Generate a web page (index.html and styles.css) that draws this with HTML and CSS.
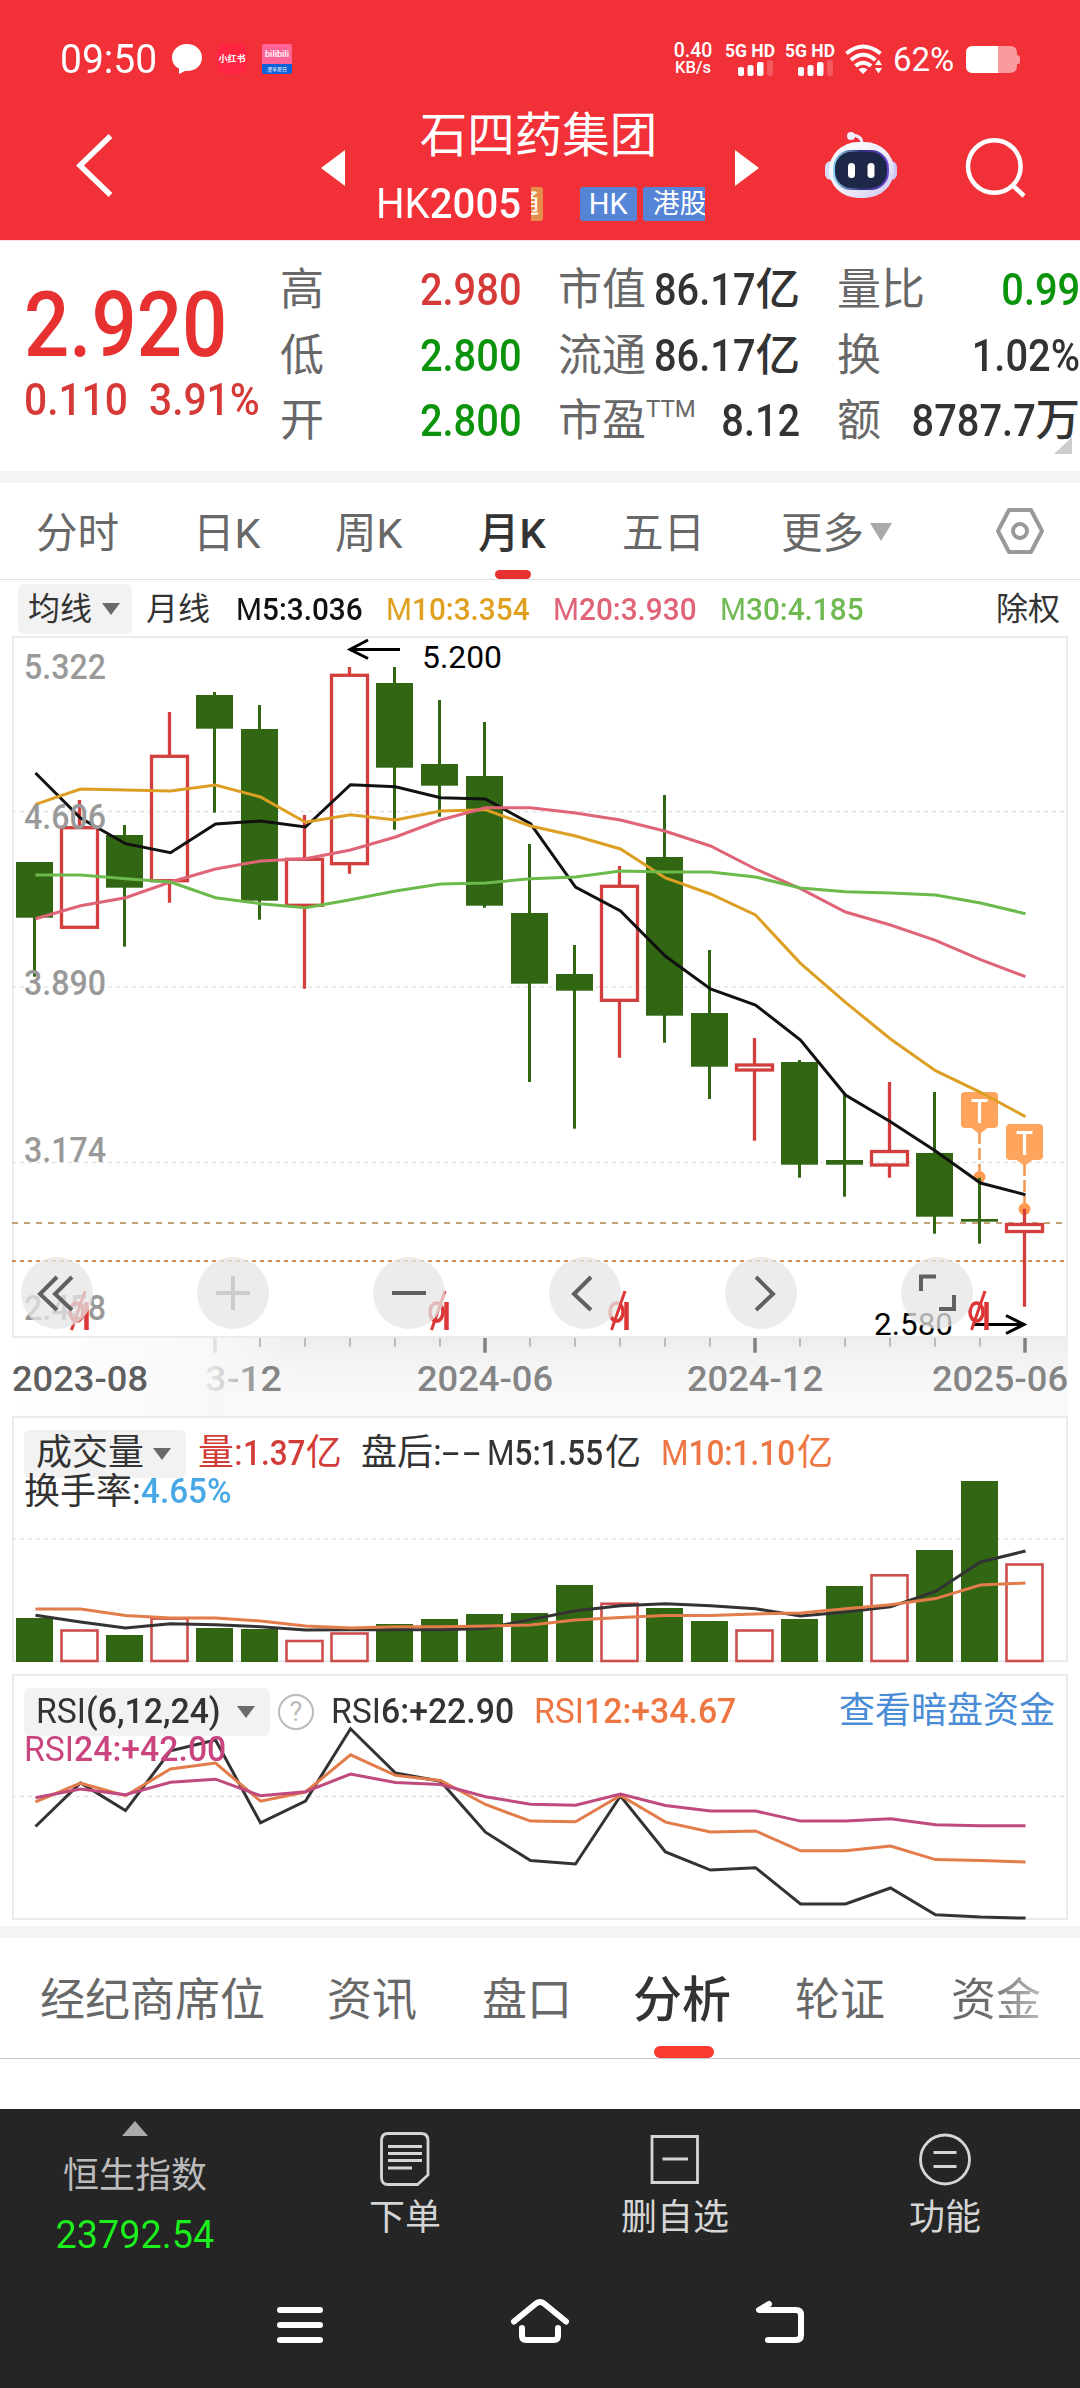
FILE: index.html
```html
<!DOCTYPE html>
<html lang="zh-CN">
<head>
    <meta charset="UTF-8">
    <meta name="viewport" content="width=device-width, initial-scale=1.0">
    <title>石四药集团 HK2005</title>
    <link rel="stylesheet" href="styles.css">
</head>
<body>
    <header class="header">
        <div class="status-bar">
            <span class="time"><span class="num">09:50</span></span>
            <svg class="app-icon" width="30" height="30" viewBox="0 0 30 30"><path d="M15 0C6.500 0 0 6 0 13.500c0 5 2.800 9 7 11.300V30l6-3c10 .8 17-5 17-13.500C30 6 23.500 0 15 0z" fill="#fff"/></svg>
            <span class="app-icon app-xhs">小红书</span>
            <span class="app-icon app-bili"><b>bilibili</b><i>漫享夏日</i></span>
            <span class="spacer"></span>
            <span class="speed">0.40<small>KB/s</small></span>
            <span class="signal">5G HD
                <svg width="35" height="16" viewBox="0 0 35 16"><g fill="#fff"><rect x="0" y="7" width="6" height="9" rx="2"/><rect x="9.500" y="5" width="6" height="11" rx="2"/><rect x="19" y="2" width="6.500" height="14" rx="2"/><rect x="29" y="0" width="6" height="16" rx="2" opacity=".2"/></g></svg>
            </span>
            <span class="signal">5G HD
                <svg width="35" height="16" viewBox="0 0 35 16"><g fill="#fff"><rect x="0" y="7" width="6" height="9" rx="2"/><rect x="9.500" y="5" width="6" height="11" rx="2"/><rect x="19" y="2" width="6.500" height="14" rx="2"/><rect x="29" y="0" width="6" height="16" rx="2" opacity=".2"/></g></svg>
            </span>
            <svg class="wifi" width="37" height="30" viewBox="0 0 37 30">
                <g fill="none" stroke="#fff" stroke-width="4"><path d="M1.500 9.500Q18 -4.500 35.500 9.500"/><path d="M6 16Q18 5.500 30.500 16"/><path d="M10.500 22Q18 15.500 26 22"/></g>
                <path d="M13.500 25.500Q18 22 22.500 25.500L18 30z" fill="#fff"/>
                <path d="M30 21l3.500-5.500L37 21zM30 24h7l-3.500 5.500z" fill="#fff"/>
            </svg>
            <span class="percent">62%</span>
            <svg width="54" height="27" viewBox="0 0 54 27"><path d="M7 0h37q7 0 7 7v2q3 0 3 3v4q0 2-3 2v2q0 7-7 7H7q-7 0-7-7V7q0-7 7-7z" fill="#f99a9c"/><path d="M7 0h25v27H7q-7 0-7-7V7q0-7 7-7z" fill="#fff"/></svg>
        </div>
        <div class="nav-bar">
            <svg class="back" width="40" height="66" viewBox="75 132 40 66"><path d="M110.500 136L80 165.500l30.500 29.500" fill="none" stroke="#fff" stroke-width="5.500"/></svg>
            <svg class="prev" width="24" height="36" viewBox="0 0 24 36"><path d="M24 0v36L0 18z" fill="#fff"/></svg>
            <div class="title">
                <h1>石四药集团</h1>
                <div class="code">
                    <span class="code-text"><span class="num">HK<b>2005</b></span></span>
                    <span class="tag tag-orange">通</span>
                    <span class="tag tag-hk">HK</span>
                    <span class="tag tag-market">港股</span>
                </div>
            </div>
            <svg class="next" width="24" height="36" viewBox="0 0 24 36"><path d="M0 0v36l24-18z" fill="#fff"/></svg>
            <svg class="robot" width="72" height="68" viewBox="825 131 72 68">
                <defs>
                    <linearGradient id="shell" x1="0" y1="0" x2="1" y2="1"><stop offset="0" stop-color="#fff"/><stop offset=".6" stop-color="#eceafa"/><stop offset="1" stop-color="#c9c4f0"/></linearGradient>
                    <linearGradient id="rim" x1="0" y1="0" x2="1" y2="0"><stop offset="0" stop-color="#8fd3f5"/><stop offset=".5" stop-color="#2b2d6e"/><stop offset="1" stop-color="#6b46d8"/></linearGradient>
                </defs>
                <path d="M851 135q11 0 11 9" fill="none" stroke="#eeebfa" stroke-width="3"/>
                <circle cx="851" cy="136" r="4" fill="#f2effc"/>
                <rect x="825" y="161" width="12" height="19" rx="6" fill="#d8defa"/>
                <rect x="885" y="161" width="12" height="19" rx="6" fill="#cdc6f5"/>
                <rect x="829" y="142" width="65" height="56" rx="29" fill="url(#shell)"/>
                <rect x="834" y="151" width="54" height="38" rx="17" fill="#1d2748" stroke="url(#rim)" stroke-width="2"/>
                <rect x="848" y="163" width="7" height="15" rx="3.500" fill="#fff"/>
                <rect x="867.500" y="163" width="7" height="15" rx="3.500" fill="#fff"/>
            </svg>
            <svg class="search" width="64" height="62" viewBox="964 136 64 62"><g fill="none" stroke="#fff" stroke-width="4.500"><circle cx="994.300" cy="166.500" r="26.300"/><path d="M1013 185.500l11 10.500"/></g></svg>
        </div>
    </header>

    <section class="quote">
        <div class="price-block">
            <div class="price"><span class="num">2.920</span></div>
            <div class="change"><span class="num">0.110</span><span class="num">3.91%</span></div>
        </div>
        <dl class="stats stats-1">
            <dt>高</dt><dd class="up"><span class="num">2.980</span></dd>
            <dt>低</dt><dd class="down"><span class="num">2.800</span></dd>
            <dt>开</dt><dd class="down"><span class="num">2.800</span></dd>
        </dl>
        <dl class="stats stats-2">
            <dt>市值</dt><dd><span class="num">86.17</span>亿</dd>
            <dt>流通</dt><dd><span class="num">86.17</span>亿</dd>
            <dt>市盈<sup>TTM</sup></dt><dd><span class="num">8.12</span></dd>
        </dl>
        <dl class="stats stats-3">
            <dt>量比</dt><dd class="down"><span class="num">0.99</span></dd>
            <dt>换</dt><dd><span class="num">1.02%</span></dd>
            <dt>额</dt><dd><span class="num">8787.7</span>万</dd>
        </dl>
        <span class="corner"></span>
    </section>

    <nav class="period-tabs">
        <span>分时</span>
        <span>日K</span>
        <span>周K</span>
        <span class="active">月K</span>
        <span>五日</span>
        <span>更多<i class="caret"></i></span>
        <svg width="48" height="46" viewBox="0 0 48 46"><g fill="none" stroke="#999" stroke-width="4" stroke-linejoin="round"><path d="M13 2h22l11 21-11 21H13L2 23z"/><circle cx="24" cy="23" r="7"/></g></svg>
    </nav>

    <div class="ma-legend">
        <span class="picker">均线<i class="caret"></i></span>
        <span>月线</span>
        <span class="num ma5">M<b>5:3.036</b></span>
        <span class="num ma10">M<b>10:3.354</b></span>
        <span class="num ma20">M<b>20:3.930</b></span>
        <span class="num ma30">M<b>30:4.185</b></span>
        <span>除权</span>
    </div>

    <section class="panel">
        <svg width="1080" height="780" viewBox="0 636 1080 780">
            <defs>
                <linearGradient id="axisBg" x1="0" y1="0" x2="0" y2="1"><stop offset="0" stop-color="#ededed"/><stop offset=".5" stop-color="#f7f7f7"/><stop offset="1" stop-color="#fafafa"/></linearGradient>
                <linearGradient id="axisFade" x1="0" y1="0" x2="1" y2="0"><stop offset="0" stop-color="#fff"/><stop offset=".7" stop-color="#f8f8f8"/><stop offset="1" stop-color="#f8f8f8" stop-opacity="0"/></linearGradient>
                <linearGradient id="labelFade" x1="0" y1="0" x2="1" y2="0"><stop offset="0" stop-color="#e8e8e8"/><stop offset=".3" stop-color="#d0d0d0"/><stop offset=".75" stop-color="#858585"/><stop offset="1" stop-color="#858585"/></linearGradient>
            </defs>
            <rect x="13" y="1338" width="1055" height="78" fill="url(#axisBg)"/>
            <rect x="13" y="1338" width="290" height="78" fill="url(#axisFade)"/>
            <rect class="frame" x="13" y="637" width="1054" height="700"/>
            <g class="grid-line"><path d="M12 811.500H1067M12 987H1067M12 1162.500H1067"/></g>
            <path d="M12 1223H1067" stroke="#c0a478" stroke-width="2" stroke-dasharray="6 6"/>
            <path d="M12 1261H1067" stroke="#d68f55" stroke-width="2" stroke-dasharray="4 4"/>
            <g id="markers"></g>
            <g id="candles"></g>
            <g id="maLines"></g>
            <g class="axis-num">
                <text x="24" y="679" textLength="82" lengthAdjust="spacingAndGlyphs">5.322</text>
                <text x="24" y="829" textLength="82" lengthAdjust="spacingAndGlyphs">4.606</text>
                <text x="24" y="995" textLength="82" lengthAdjust="spacingAndGlyphs">3.890</text>
                <text x="24" y="1162" textLength="82" lengthAdjust="spacingAndGlyphs">3.174</text>
                <text x="24" y="1320" textLength="82" lengthAdjust="spacingAndGlyphs">2.458</text>
            </g>
            <g class="extreme">
                <text x="422" y="668" textLength="80" lengthAdjust="spacingAndGlyphs">5.200</text>
                <path d="M400 649.500H350M368 640l-18 9.500 18 9"/>
                <text x="874" y="1335" textLength="79" lengthAdjust="spacingAndGlyphs">2.580</text>
                <path d="M974 1324.500H1024M1006 1315.500l18 9-18 9"/>
            </g>
            <g id="rights"></g>
            <g id="ticks"></g>
            <g class="dates">
                <text class="first" x="12" y="1391" textLength="136" lengthAdjust="spacingAndGlyphs">2023-08</text>
                <text x="205" y="1391" textLength="77" lengthAdjust="spacingAndGlyphs" fill="url(#labelFade)">3-12</text>
                <text x="417" y="1391" textLength="136" lengthAdjust="spacingAndGlyphs">2024-06</text>
                <text x="687" y="1391" textLength="136" lengthAdjust="spacingAndGlyphs">2024-12</text>
                <text x="932" y="1391" textLength="136" lengthAdjust="spacingAndGlyphs">2025-06</text>
            </g>
        </svg>
        <div class="chart-tools">
            <span><svg width="72" height="72"><path d="M36 20L19 37l17 16M51 20L34 37l17 16"/></svg></span>
            <span class="off"><svg width="72" height="72"><path d="M19 36H53M36 19V53"/></svg></span>
            <span><svg width="72" height="72"><path d="M19 36H53"/></svg></span>
            <span><svg width="72" height="72"><path d="M42 20L25 37l17 16"/></svg></span>
            <span><svg width="72" height="72"><path d="M31 20l17 17-17 16"/></svg></span>
            <span><svg width="72" height="72"><path d="M20 34V19.500H35M38 52H53V38"/></svg></span>
        </div>
    </section>

    <section class="panel">
        <svg width="1080" height="258" viewBox="0 1416 1080 258">
            <rect class="frame" x="13" y="1417" width="1054" height="244"/>
            <g class="grid-line"><path d="M12 1539H1067"/></g>
            <g id="volumes"></g>
            <g id="volLines"></g>
        </svg>
        <div class="indicator vol">
            <div class="row">
                <span class="picker">成交量<i class="caret"></i></span>
                <span class="red">量:<span class="num">1.37</span>亿</span>
                <span>盘后:<em>--</em></span>
                <span><span class="num">M<b>5:1.55</b></span>亿</span>
                <span class="orange"><span class="num">M<b>10:1.10</b></span>亿</span>
            </div>
            <div class="row row-2">
                <span>换手率:</span><span class="num blue">4.65%</span>
            </div>
        </div>
    </section>

    <section class="panel">
        <svg width="1080" height="252" viewBox="0 1674 1080 252">
            <rect class="frame" x="13" y="1675" width="1054" height="244"/>
            <g class="grid-line"><path d="M12 1796.500H1067"/></g>
            <g id="rsiLines"></g>
        </svg>
        <div class="indicator rsi">
            <div class="row">
                <span class="picker"><span class="num">RSI<b>(6,12,24)</b></span><i class="caret"></i></span>
                <span class="help">?</span>
                <span class="num">RSI<b>6:+22.90</b></span>
                <span class="num orange">RSI<b>12:+34.67</b></span>
                <span class="link">查看暗盘资金</span>
            </div>
            <div class="row row-2"><span class="num pink">RSI<b>24:+42.00</b></span></div>
        </div>
    </section>

    <nav class="info-tabs">
        <span>经纪商席位</span>
        <span>资讯</span>
        <span>盘口</span>
        <span class="active">分析</span>
        <span>轮证</span>
        <span class="fade">资金</span>
    </nav>

    <footer class="footer">
        <div class="actions">
            <div class="index">
                <i class="arrow-up"></i>
                <span>恒生指数</span>
                <strong>23792.54</strong>
            </div>
            <div class="action">
                <svg width="50" height="54" viewBox="0 0 50 54"><path d="M8 1.500H41q7 0 7 7V43L37.500 52.500H8q-6.500 0-6.500-7V8.500q0-7 6.500-7z"/><path d="M8 14.500H42M8 21.500H42M8 28.500H42M8 36H32"/></svg>
                <span>下单</span>
            </div>
            <div class="action">
                <svg width="50" height="54" viewBox="0 0 50 54"><path d="M2 4.500H47.500V50.500H2zM12.500 27H38"/></svg>
                <span>删自选</span>
            </div>
            <div class="action">
                <svg width="52" height="54" viewBox="0 0 52 54"><circle cx="26" cy="27.500" r="24.500"/><path d="M14.500 20.500H37.500M14.500 34.500H37.500"/></svg>
                <span>功能</span>
            </div>
        </div>
        <div class="system-nav">
            <svg width="58" height="50" viewBox="271 2296 58 50"><path d="M280 2310H320M280 2325H320M280 2340H320"/></svg>
            <svg width="62" height="50" viewBox="509 2296 62 50"><path d="M514 2321.500L536 2303.500q4-3 8 0L566 2321.500M522 2328v8q0 4 4 4H554q4 0 4-4v-8"/></svg>
            <svg width="58" height="50" viewBox="751 2296 58 50"><path d="M769 2304l-10 6H796q5 0 5 5v20q0 5-5 5H768"/></svg>
        </div>
    </footer>

    <script src="chart.js"></script>
</body>
</html>
```
FILE: styles.css
```css
* {
    margin: 0;
    padding: 0;
    box-sizing: border-box;
}

body {
    width: 1080px;
    height: 2388px;
    overflow: hidden;
    background: #fff;
    font-family: Roboto, 'Noto Sans CJK SC', sans-serif;
    color: #333;
}

svg {
    display: block;
    flex: none;
}

b {
    font-weight: 500;
}

/* narrow figures */
.num {
    display: inline-block;
    white-space: nowrap;
    transform: scaleX(0.9);
    transform-origin: left center;
}

.caret {
    display: inline-block;
    border: 9px solid transparent;
    border-top: 12px solid #6a6a6a;
    border-bottom: 0;
}

/* header */
.header {
    height: 241px;
    background: #f13038;
    border-bottom: 1px solid #fde0e2;
    color: #fff;
}

.status-bar {
    display: flex;
    align-items: center;
    height: 118px;
    padding: 0 60px 0 60px;
}

.time {
    width: 112px;
    font-size: 40px;
}

.time .num {
    transform: scaleX(0.975);
}

.app-icon {
    width: 30px;
    height: 30px;
    margin-right: 15px;
}

.app-xhs {
    border-radius: 7px;
    background: #ff2442;
    font-size: 9px;
    line-height: 30px;
    text-align: center;
    font-weight: 700;
    white-space: nowrap;
}

.app-bili {
    display: flex;
    flex-direction: column;
    border-radius: 2px;
    background: linear-gradient(#ff6496 68%, #0f62d8 68%);
    text-align: center;
    overflow: hidden;
}

.app-bili b {
    font-size: 9px;
    line-height: 20px;
}

.app-bili i {
    font-size: 5px;
    line-height: 10px;
    font-style: normal;
}

.spacer {
    flex: 1;
}

.speed {
    display: flex;
    flex-direction: column;
    align-items: center;
    width: 42px;
    margin-right: 11px;
    font-size: 19.5px;
    font-weight: 500;
    line-height: 17px;
}

.speed small {
    font-size: 16.5px;
}

.signal {
    width: 51px;
    margin-right: 9px;
    font-size: 17.5px;
    font-weight: 700;
    line-height: 16px;
    white-space: nowrap;
}

.signal svg {
    margin: 1px 0 0 13px;
}

.wifi {
    margin-right: 11px;
    margin-left: 0;
}

.percent {
    width: 72px;
    margin-right: 1px;
    font-size: 33px;
}

.nav-bar {
    display: flex;
    padding-left: 75px;
}

.back {
    margin: 14px 206px 0 0;
}

.prev {
    margin: 32px 34px 0 0;
}

.next {
    margin: 32px 66px 0 30px;
}

.robot {
    margin: 13px 67px 0 0;
}

.search {
    margin-top: 18px;
}

.title {
    width: 326px;
}

.title h1 {
    height: 69px;
    padding-right: 7px;
    margin-top: -16px;
    font-size: 47.5px;
    line-height: 69px;
    font-weight: 400;
    text-align: center;
    white-space: nowrap;
}

.code {
    display: flex;
    margin-top: 16px;
    overflow: hidden;
}

.code-text {
    width: 154px;
    margin-left: -3px;
    margin-right: 3px;
    font-size: 42px;
    line-height: 34px;
}

.code-text .num {
    transform: scaleX(0.955);
}

.tag {
    flex: none;
    height: 34px;
    margin-right: 6px;
    border-radius: 3px;
    background: #5685d8;
    font-size: 26px;
    line-height: 34px;
    text-align: center;
    white-space: nowrap;
}

.tag-orange {
    width: 12px;
    margin-right: 37px;
    border-radius: 0 3px 3px 0;
    background: #e58d4b;
    text-indent: -21px;
    overflow: hidden;
}

.tag-hk {
    width: 57px;
    font-size: 29px;
}

.tag-market {
    padding-left: 10px;
    margin-right: 0;
    width: 70px;
    text-align: left;
    font-size: 27px;
}

/* quote */
.quote {
    position: relative;
    display: flex;
    height: 230px;
    padding-top: 17px;
}

.price-block {
    width: 280px;
    padding-left: 24px;
    color: #e73131;
}

.price {
    margin-top: 12px;
    font-size: 91px;
    line-height: 110px;
    font-weight: 500;
}

.price .num {
    transform: scaleX(0.875);
}

.change {
    display: flex;
    color: #d63a38;
    font-size: 44.5px;
    line-height: 40px;
    font-weight: 500;
}

.change .num {
    width: 125px;
    transform: scaleX(0.915);
}

.stats {
    display: grid;
    grid-auto-rows: 65.5px;
    grid-template-columns: 44px 1fr;
    line-height: 65.5px;
    white-space: nowrap;
}

.stats dt {
    color: #686868;
    font-size: 44px;
}

.stats dd {
    font-size: 44.5px;
    font-weight: 500;
    text-align: right;
    color: #333;
}

.stats dd .num {
    transform: scaleX(0.895);
    transform-origin: right center;
}

.stats sup {
    position: relative;
    top: -3px;
    font-size: 24px;
    line-height: 0;
}

.stats .up {
    color: #d63a38;
}

.stats .down {
    color: #0c930c;
}

.stats-1 {
    width: 242px;
}

.stats-2 {
    width: 242px;
    margin-left: 36px;
}

.stats-3 {
    width: 243px;
    margin-left: 37px;
}

.corner {
    position: absolute;
    right: 8px;
    bottom: 17px;
    border-left: 18px solid transparent;
    border-bottom: 17px solid #ccc;
}

/* period tabs */
.period-tabs {
    display: grid;
    grid-template-columns: 157px 142px 143px 144px 159px 215px 48px;
    align-items: center;
    height: 109px;
    padding-left: 36px;
    border-top: 12px solid #f4f4f4;
    border-bottom: 1px solid #e2e2e2;
    font-size: 41.5px;
    line-height: 96px;
    color: #686868;
}

.period-tabs span {
    height: 96px;
    padding-top: 3px;
}

.period-tabs .active {
    position: relative;
    color: #333;
    font-weight: 500;
}

.period-tabs .active::after {
    content: '';
    position: absolute;
    left: 17px;
    bottom: 0;
    width: 36px;
    height: 9px;
    border-radius: 5px;
    background: #e73131;
}

.period-tabs .caret {
    margin: 0 0 7px 6px;
    border-width: 18px 11px 0;
    border-top-color: #aaa;
}

.ma-legend {
    display: grid;
    grid-template-columns: 128px 90px 150px 167px 167px 276px 64px;
    align-items: center;
    height: 56px;
    padding: 2px 18px 0;
    font-size: 32px;
    line-height: 50px;
    white-space: nowrap;
}

.ma-legend .num {
    transform: scaleX(0.93);
}

.picker {
    display: flex;
    align-items: center;
    justify-content: space-between;
    border-radius: 6px;
    background: #f2f2f2;
}

.ma-legend .picker {
    width: 114px;
    height: 50px;
    padding: 0 12px 0 10px;
}

.ma5 { color: #111; }
.ma10 { color: #e0a020; }
.ma20 { color: #e06478; }
.ma30 { color: #70ba54; }
.red { color: #d13c39; }
.orange { color: #ee7642; }
.blue { color: #48a8e6; }
.pink { color: #c8457f; }

/* charts */
.panel {
    position: relative;
}

.frame {
    fill: none;
    stroke: #ebebeb;
    stroke-width: 2;
}

.grid-line {
    stroke: #e3e3e3;
    stroke-width: 1.5;
    stroke-dasharray: 4 4;
}

.axis-num {
    fill: #999;
    font-size: 35.5px;
    font-weight: 500;
}

.dates {
    fill: #858585;
    font-size: 35.5px;
    font-weight: 500;
}

.dates .first {
    fill: #5f5f5f;
}

.extreme path {
    fill: none;
    stroke: #000;
    stroke-width: 3;
}

.extreme text {
    fill: #000;
    font-size: 31.5px;
}

.chart-tools {
    position: absolute;
    left: 21px;
    top: 621px;
    display: flex;
    gap: 104px;
}

.chart-tools span {
    width: 72px;
    height: 72px;
    border-radius: 50%;
    background: rgba(230, 230, 230, 0.75);
}

.chart-tools path {
    fill: none;
    stroke: #606060;
    stroke-width: 4;
}

.chart-tools .off path {
    stroke: #ccc;
}

.indicator {
    position: absolute;
    left: 24px;
    top: 12px;
    width: 1032px;
    font-size: 36px;
    white-space: nowrap;
}

.row {
    display: grid;
    align-items: center;
    height: 48px;
    line-height: 51px;
}

.indicator .picker {
    height: 48px;
    padding: 0 15px 0 12px;
}

.indicator .num {
    font-size: 35px;
}

.indicator .num.blue,
.red .num {
    font-weight: 500;
}

.indicator .num.blue {
    transform: scaleX(0.95);
}

.vol .row {
    grid-template-columns: 162px 163px 124px 175px 1fr;
}

.vol .picker {
    width: 162px;
}

.vol .row > span:not(.picker) {
    display: flex;
}

.vol .row > .red {
    padding-left: 12px;
}

.vol .row > .red .num {
    width: 63px;
}

.vol .row > span:nth-child(3) {
    padding-left: 12px;
}

.vol .row > span:nth-child(4) {
    padding-left: 14px;
}

.vol .row > span:nth-child(4) .num {
    width: 118px;
}

.vol .row > .orange {
    padding-left: 13px;
}

.vol .row > .orange .num {
    width: 136px;
}

.vol em {
    font-style: normal;
    letter-spacing: 2px;
    transform: scaleX(1.75);
    transform-origin: left;
}

.vol .row-2,
.rsi .row-2 {
    display: flex;
    height: 32px;
    line-height: 36px;
}

.rsi .row {
    grid-template-columns: 254px 53px 203px 305px 1fr;
}

.rsi .num {
    transform: scaleX(0.965);
}

.rsi .picker {
    width: 246px;
}

.help {
    width: 36px;
    height: 36px;
    border: 2px solid #bbb;
    border-radius: 50%;
    color: #bbb;
    font-size: 27px;
    line-height: 32px;
    text-align: center;
}

.link {
    color: #4a8cd6;
}

/* info tabs */
.info-tabs {
    display: grid;
    grid-template-columns: 287px 155px 151px 162px 156px 1fr;
    height: 133px;
    padding-left: 40px;
    border-top: 12px solid #f4f4f4;
    border-bottom: 1px solid #c8c8c8;
    font-size: 45px;
    line-height: 126px;
    color: #686868;
}

.info-tabs span {
    height: 120px;
}

.info-tabs .active {
    position: relative;
    font-size: 49px;
    font-weight: 500;
    color: #333;
}

.info-tabs .active::after {
    content: '';
    position: absolute;
    left: 21px;
    bottom: 0;
    width: 60px;
    height: 12px;
    border-radius: 6px;
    background: #f93b30;
}

.info-tabs .fade {
    background: linear-gradient(90deg, #686868 30px, #c8c8c8 100px);
    -webkit-background-clip: text;
    background-clip: text;
    color: transparent;
}

/* footer */
.footer {
    height: 279px;
    margin-top: 50px;
    background: #252525;
}

.actions {
    display: grid;
    grid-template-columns: repeat(4, 270px);
    height: 180px;
}

.index,
.action {
    display: flex;
    flex-direction: column;
    align-items: center;
}

.index {
    padding-top: 12px;
    color: #bbb;
    font-size: 36px;
}

.index span {
    margin-top: 14px;
    line-height: 52px;
}

.index strong {
    margin-top: 10px;
    color: #1cf01c;
    font-size: 39px;
    line-height: 46px;
    font-weight: 400;
    transform: scaleX(0.97);
}

.arrow-up {
    border: 13.5px solid transparent;
    border-bottom: 15px solid #aaa;
    border-top: 0;
}

.action {
    padding-top: 23px;
    color: #d5d5d5;
    font-size: 36px;
}

.action span {
    margin-top: 6px;
    line-height: 52px;
}

.action svg {
    fill: none;
    stroke: #d5d5d5;
    stroke-width: 2.8;
}

.system-nav {
    display: flex;
    justify-content: center;
    gap: 180px;
    padding-top: 7px;
}

.system-nav path {
    fill: none;
    stroke: #fff;
    stroke-width: 6;
    stroke-linecap: round;
    stroke-linejoin: round;
}
```
FILE: chart.js
```javascript
const STEP = 45;
const FIRST = 34.5;
const GREEN = '#316612';
const RED = '#d23f3c';

const x = i => FIRST + i * STEP;

// [rising, body top, body bottom, high, low]
const candles = [
    [0, 862, 917.7, 862, 976.7], [1, 827.7, 927.3, 800, 927.3], [0, 835, 887.7, 825, 946.7],
    [1, 756.3, 880.7, 712, 902.7], [0, 695, 728.7, 692, 812.7], [0, 729, 900.7, 705, 919.7],
    [1, 859.3, 905.3, 815, 988.7], [1, 675.3, 863.7, 667, 873.7], [0, 683, 767.7, 667, 829.7],
    [0, 764, 785.7, 700, 816.7], [0, 776, 905.7, 722, 907.7], [0, 913, 983.7, 844, 1082],
    [0, 974, 990.7, 945, 1128.7], [1, 886.3, 1000.3, 866, 1057.7], [0, 857, 1015.7, 795, 1042.7],
    [0, 1013, 1066.7, 950, 1099], [1, 1065, 1070, 1038, 1140.7], [0, 1062, 1164.7, 1060, 1177.7],
    [0, 1160, 1164.7, 1095, 1196.7], [1, 1151.5, 1165, 1082, 1177.7], [0, 1153, 1216.7, 1092, 1233.7],
    [0, 1219, 1221.7, 1177.7, 1243.7], [1, 1224.5, 1231.5, 1208.7, 1306.7]
];

const ma = {
    '#111': [773, 818, 843.7, 852.7, 824, 821, 827, 784.7, 786.7, 797.7, 799, 823.7, 887, 911, 956.3, 989, 1005, 1040, 1095, 1121.7, 1151, 1183, 1194.7],
    '#dc9f24': [804.3, 789, 790, 791, 785, 797, 822.3, 814.7, 820, 811, 809.7, 826, 836, 849, 878, 894, 915, 963.3, 1002.3, 1039, 1070.7, 1092.3, 1116.7],
    '#e06478': [918.7, 905.7, 897.7, 882, 869, 861, 858.7, 850, 837, 820, 807.7, 807.7, 813, 820, 831.3, 846, 869, 888.7, 912, 925, 940.3, 959.7, 976.7],
    '#6cb94c': [875, 875, 878.7, 882, 897.7, 903.7, 907.7, 899.7, 891, 884, 883, 878.7, 877, 871, 872, 872, 877, 888, 891.7, 893, 895, 903, 913.7]
};

const volumes = [1618, 1630.5, 1635, 1618.6, 1628, 1629, 1641, 1633.5, 1624, 1619, 1614, 1613, 1585, 1603.7, 1608, 1621, 1630.5, 1619, 1586, 1575.3, 1550, 1481, 1564.5];

const volMa = {
    '#333': [1615.2, 1622, 1628, 1623.7, 1624.7, 1626.7, 1630, 1629.7, 1629.7, 1629.7, 1628.4, 1619.6, 1610.8, 1605.7, 1603.7, 1605.7, 1608.8, 1615.9, 1612, 1606.8, 1591.5, 1562, 1551],
    '#e27c4a': [1609, 1609, 1615.5, 1618, 1618, 1621, 1626, 1628, 1626.7, 1626.7, 1626, 1625, 1620, 1617.6, 1615.5, 1615.5, 1613.9, 1613, 1608.8, 1604.7, 1598.6, 1585, 1583]
};

const rsi = {
    '#333': [1826.5, 1782.9, 1810.6, 1750.8, 1740, 1822.8, 1801.1, 1728.8, 1773.1, 1781.2, 1832.2, 1860.6, 1864, 1796, 1851.9, 1870.1, 1867.7, 1903.9, 1903.9, 1888, 1914.7, 1917.1, 1918.1],
    '#e27c4a': [1801.8, 1783.2, 1795.7, 1769, 1763, 1801.1, 1792, 1754.8, 1775.4, 1780.5, 1804.5, 1821.1, 1821.8, 1795.4, 1822.1, 1831.9, 1830.9, 1850.8, 1850.8, 1846.1, 1859.6, 1860.6, 1862],
    '#c04a7e': [1797.8, 1789, 1794.7, 1782.2, 1779.2, 1795.7, 1791.7, 1774.1, 1782.5, 1784.6, 1796.7, 1804.2, 1805.2, 1794, 1805.5, 1811, 1811, 1821.1, 1821.1, 1818.7, 1824.8, 1825.8, 1825.8]
};

function fill(id, html) {
    document.getElementById(id).innerHTML = html;
}

function lines(series) {
    return Object.entries(series).map(([color, ys]) => {
        const points = ys.map((y, i) => `${x(i) + 1},${y}`).join(' ');
        return `<polyline points="${points}" fill="none" stroke="${color}" stroke-width="3"/>`;
    }).join('');
}

fill('candles', candles.map(([up, top, bottom, high, low], i) => {
    const c = x(i);
    if (up) {
        return `<path d="M${c} ${high}V${top}M${c} ${bottom}V${low}" stroke="${RED}" stroke-width="3.3"/>
            <rect x="${c - 18}" y="${top}" width="36" height="${bottom - top}" fill="none" stroke="${RED}" stroke-width="3.3"/>`;
    }
    return `<path d="M${c} ${high}V${low}" stroke="${GREEN}" stroke-width="3"/>
        <rect x="${c - 18.5}" y="${top}" width="37" height="${bottom - top}" fill="${GREEN}"/>`;
}).join(''));

fill('volumes', volumes.map((top, i) => {
    const c = x(i);
    if (candles[i][0]) {
        return `<rect x="${c - 18}" y="${top}" width="36" height="${1661 - top}" fill="none" stroke="#cc4f4d" stroke-width="2.6"/>`;
    }
    return `<rect x="${c - 18.5}" y="${top}" width="37" height="${1662 - top}" fill="${GREEN}"/>`;
}).join(''));

fill('maLines', lines(ma));
fill('volLines', lines(volMa));
fill('rsiLines', lines(rsi));

// trade markers
fill('markers', [[21, 1092, 1177], [22, 1124, 1209]].map(([i, top, dot]) => {
    const c = x(i);
    return `<rect x="${c - 18.5}" y="${top}" width="37" height="36" rx="4" fill="#ffa45c"/>
        <path d="M${c - 8} ${top + 36}h16l-8 6z" fill="#ffa45c"/>
        <path d="M${c} ${top + 40}V${dot}" stroke="#f0984f" stroke-width="2.5" stroke-dasharray="12 4"/>
        <circle cx="${c}" cy="${dot}" r="6" fill="#ff9a4e"/>
        <path d="M${c - 8} ${top + 8.5}h16M${c} ${top + 8}v23" stroke="#fff" stroke-width="3.2"/>`;
}).join(''));

// ex-rights signs
fill('rights', [1, 9, 13, 21].map(i => {
    const c = x(i);
    return `<g fill="none" stroke="#dd3636"><ellipse cx="${c - 3}" cy="1312" rx="6.500" ry="9" stroke-width="3.500"/>
        <path d="M${c + 7} 1302V1330" stroke-width="4.500"/><path d="M${c + 5.5} 1291L${c - 8} 1330" stroke-width="3"/></g>`;
}).join(''));

// time axis
let ticks = '';
for (let i = 4; i < 23; i++) {
    const major = (i - 4) % 6 === 0;
    const color = i === 4 ? '#e0e0e0' : major ? '#808080' : '#bbb';
    ticks += `<path d="M${x(i) + 0.5} 1338V${major ? 1352.7 : 1346.7}" stroke="${color}" stroke-width="${major ? 3.5 : 2}"/>`;
}
fill('ticks', ticks);
```
